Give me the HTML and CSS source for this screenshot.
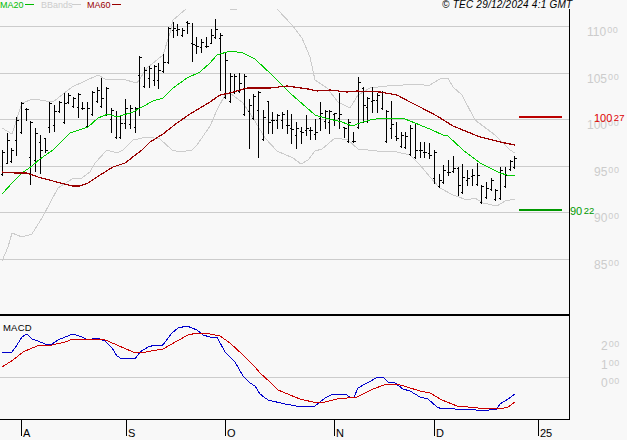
FILE: index.html
```html
<!DOCTYPE html>
<html lang="en">
<head>
<meta charset="utf-8">
<title>TEC chart</title>
<link rel="stylesheet" href="styles.css">
</head>
<body>
<svg class="chart" width="627" height="440" viewBox="0 0 627 440" xmlns="http://www.w3.org/2000/svg">
  <g class="grid">
    <path d="M0 26.5H569M0 73.5H569M0 119.5H569M0 166.5H569M0 212.5H569M0 259.5H569M0 377.5H569"/>
  </g>

  <g class="legend">
    <text class="t-green" x="0" y="8">MA20</text>
    <path class="mark mark-green" d="M25 4.5H34"/>
    <text class="t-gray" x="41" y="8">BBands</text>
    <path class="mark mark-gray" d="M72 4.5H81"/>
    <text class="t-maroon" x="87" y="8">MA60</text>
    <path class="mark mark-maroon" d="M112 4.5H121"/>
  </g>
  <text class="stamp" x="442" y="8">© TEC 29/12/2024 4:1 GMT</text>

  <polyline class="line band" points="2,128 12,134 22,103 33,99 53,102 72,87 98,75 105,79 122,79 137,83 147,68 163,55 170,33 173,20 186,9"/>
  <polyline class="line band" points="230,9 237,9"/>
  <polyline class="line band" points="277,9 292,25 302,38 310,57 315,80 327,88 338,102 350,108 358,95 370,88 387,86 420,84 428,86 440,79 448,78 453,87 462,95 475,120 495,135 510,150 515,153"/>
  <polyline class="line band" points="2,261 8,247 12,233 22,237 32,234 42,218 58,188 72,179 82,178 90,172 95,163 107,150 117,153 123,150 133,140 147,137 160,139 172,150 180,152 192,150 197,145 210,126 217,110 225,95 230,93 243,103 253,118 265,138 277,151 293,158 301,164 308,160 315,151 322,149 335,138 348,140 358,149 377,151 397,152 410,155 420,165 430,177 440,188 453,195 467,200 475,198 483,203 497,206 505,201 515,199"/>

  <g id="bars" class="bars"></g>

  <polyline class="line ma20" points="2,194 13,182 22,173 32,166 40,159 53,150 70,133 88,127 98,118 108,114 117,117 133,112 142,107 153,101 163,98 173,88 187,78 200,72 210,63 217,55 230,51 243,53 255,59 272,75 290,93 315,115 325,118 342,122 352,126 360,123 370,120 382,118 392,118 405,119 420,125 432,130 443,135 448,136 463,150 480,163 500,173 507,175 515,175"/>
  <polyline class="line ma60" points="2,172 15,173 27,173 38,177 53,181 72,186 80,186 88,183 100,175 113,167 125,163 142,150 150,142 163,134 177,123 190,114 210,102 220,95 230,93 247,88 270,88 287,86 308,89 317,91 330,90 347,92 357,91 380,92 397,95 410,102 420,107 437,116 453,126 480,137 500,142 515,145"/>

  <path class="level-up" d="M519 117H562"/>
  <path class="level-down" d="M519 210H562"/>

  <path class="axis" d="M569.5 9V419.5H0"/>
  <path class="divider" d="M0 315H570"/>
  <path class="axis" d="M21.5 419V436M126.5 419V436M225.5 419V436M334.5 419V436M434.5 419V436M538.5 419V436"/>

  <text class="sub" x="3" y="331">MACD</text>
  <polyline class="line macd-blue" points="2,353 12,352 17,345 22,337 27,334 32,339 38,341 45,344 52,344 58,340 65,337 73,334 82,337 88,340 97,338 105,341 112,348 117,356 122,359 128,358 135,359 140,352 148,347 155,345 162,346 172,333 178,328 187,326 197,330 203,335 210,337 217,337 225,352 235,362 243,376 250,383 255,386 260,394 268,400 285,404 302,407 315,406 325,398 333,394 345,394 350,397 354,397 358,388 367,383 378,377 383,377 388,382 395,383 403,389 410,391 420,397 428,399 437,407 442,409 452,408 458,410 470,409 482,411 497,409 500,404 508,399 515,394"/>
  <polyline class="line macd-red" points="2,367 13,360 23,352 32,348 40,345 52,345 65,342 73,339 88,339 103,339 117,345 133,352 140,353 163,349 177,341 188,335 197,333 210,334 220,336 230,343 243,355 255,367 260,373 270,382 278,390 290,395 300,399 317,403 325,402 337,399 357,397 373,389 387,384 397,384 407,387 420,391 430,393 442,400 457,406 478,408 500,409 508,407 515,402"/>

  <g class="scale">
    <text x="587" y="36">110<tspan class="frac" dx="1" dy="-3">00</tspan></text>
    <text x="587" y="83">105<tspan class="frac" dx="1" dy="-3">00</tspan></text>
    <text x="587" y="129">100<tspan class="frac" dx="1" dy="-3">00</tspan></text>
    <text x="594" y="176">95<tspan class="frac" dx="1" dy="-3">00</tspan></text>
    <text x="594" y="222">90<tspan class="frac" dx="1" dy="-3">00</tspan></text>
    <text x="594" y="269">85<tspan class="frac" dx="1" dy="-3">00</tspan></text>
    <text x="601" y="350">2<tspan class="frac" dx="1" dy="-3">00</tspan></text>
    <text x="601" y="369">1<tspan class="frac" dx="1" dy="-3">00</tspan></text>
    <text x="601" y="387">0<tspan class="frac" dx="1" dy="-3">00</tspan></text>
  </g>

  <text class="price price-up" x="594" y="122">100<tspan class="price-frac" dx="1.5" dy="-1">27</tspan></text>
  <text class="price price-down" x="570" y="215">90<tspan class="price-frac" dx="1.5" dy="-1">22</tspan></text>

  <g class="months">
    <text x="23" y="437">A</text>
    <text x="128" y="437">S</text>
    <text x="227" y="437">O</text>
    <text x="336" y="437">N</text>
    <text x="436" y="437">D</text>
    <text x="540" y="437">25</text>
  </g>
</svg>
<script src="chart.js"></script>
</body>
</html>
```

FILE: styles.css
```css
html, body {
  margin: 0;
  padding: 0;
  background: #f8f8f8;
}

.chart {
  display: block;
  font-family: "Liberation Sans", Arial, sans-serif;
}

.grid path {
  fill: none;
  stroke: #cccccc;
  stroke-width: 1;
  shape-rendering: crispEdges;
}

.legend text {
  font-size: 9px;
}

.t-green { fill: #00bb00; }
.t-gray { fill: #cccccc; }
.t-maroon { fill: #990000; }

.mark {
  fill: none;
  stroke-width: 1;
  shape-rendering: crispEdges;
}
.mark-green { stroke: #00bb00; }
.mark-gray { stroke: #cccccc; }
.mark-maroon { stroke: #990000; }

.stamp {
  font-size: 10px;
  font-style: italic;
  letter-spacing: 0.24px;
  fill: #000000;
}

.line {
  fill: none;
  stroke-width: 1;
  shape-rendering: crispEdges;
}
.band { stroke: #cccccc; }
.ma20 { stroke: #00cc00; }
.ma60 { stroke: #990000; stroke-width: 1.2; }
.macd-blue { stroke: #0000cc; }
.macd-red { stroke: #cc0000; }

.bars path {
  fill: none;
  stroke: #000000;
  stroke-width: 1;
  shape-rendering: crispEdges;
}

.level-up,
.level-down {
  fill: none;
  stroke-width: 2;
  shape-rendering: crispEdges;
}
.level-up { stroke: #bb0000; }
.level-down { stroke: #009900; }

.axis {
  fill: none;
  stroke: #000000;
  stroke-width: 1;
  shape-rendering: crispEdges;
}

.divider {
  fill: none;
  stroke: #000000;
  stroke-width: 2;
  shape-rendering: crispEdges;
}

.sub {
  font-size: 9.5px;
  letter-spacing: 0.2px;
  fill: #000000;
}

.scale text {
  font-size: 12px;
  fill: #cccccc;
}
.scale .frac {
  font-size: 9px;
  letter-spacing: 0.6px;
}

.price {
  font-size: 11px;
}
.price-frac {
  font-size: 9.5px;
}
.price-up { fill: #dd0000; }
.price-down { fill: #009900; }

.months text {
  font-size: 11px;
  fill: #000000;
}
```

FILE: chart.js
```js
// Daily bars: [high, low, open, close] in pixels of the chart.
var BARS = [
[150,175,174,152],[133,163,163,140],[148,162,161,150],[117,155,140,120],[102,133,132,103],
[108,120,109,109],[121,184,157,122],[128,171,160,133],[135,173,142,150],[138,152,138,150],
[102,132,127,103],[105,131,125,111],[101,112,111,102],[93,123,122,103],[93,103,102,95],
[97,107,106,98],[93,117,107,94],[102,109,108,108],[102,127,126,108],[91,115,114,92],
[87,102,101,90],[78,107,106,98],[87,115,114,88],[108,132,119,110],[111,138,137,116],
[115,138,137,123],[99,128,123,108],[105,128,124,108],[107,132,127,108],[56,115,75,57],
[67,87,86,70],[66,87,78,68],[65,85,80,66],[63,88,80,70],[54,72,71,62],
[27,63,62,28],[22,37,30,28],[24,35,30,29],[28,36,35,30],[21,33,22,23],
[23,61,43,44],[37,53,45,46],[39,52,47,42],[37,47,46,46],[29,43,43,35],
[19,38,37,29],[33,90,38,35],[52,98,97,60],[73,102,101,76],[74,93,92,76],
[73,92,91,83],[74,115,114,76],[99,148,111,105],[94,119,118,96],[91,157,110,92],
[110,140,139,117],[101,133,101,122],[112,133,120,120],[114,128,120,115],[112,128,120,114],
[110,133,125,125],[114,143,128,129],[122,148,135,128],[127,143,131,132],[115,135,130,128],
[127,139,130,130],[119,139,134,132],[102,130,118,113],[110,128,121,111],[110,133,122,111],
[113,125,114,113],[93,128,118,114],[127,137,127,128],[119,142,141,122],[132,142,141,141],
[77,128,127,82],[87,122,88,105],[97,122,107,98],[87,112,101,100],[93,112,100,95],
[91,109,108,92],[110,142,141,111],[101,138,128,124],[122,140,136,138],[132,147,146,135],
[132,148,147,136],[125,155,154,128],[123,158,157,150],[142,157,150,150],[142,157,152,152],
[143,158,153,155],[150,183,178,152],[174,187,186,180],[165,183,182,170],[160,175,172,172],
[156,172,171,168],[167,195,168,185],[164,193,192,177],[170,185,180,178],[169,185,176,175],
[163,185,184,175],[185,203,202,186],[182,198,197,188],[178,190,189,180],[189,200,199,190],
[167,199,198,170],[167,187,186,175],[160,170,169,161],[156,168,167,158]
];

var d = "";
BARS.forEach(function (b, i) {
  var x = Math.floor(2.3 + 4.747 * i) + 0.5;
  d += "M" + x + " " + b[0] + "V" + (b[1] + 1);
  d += "M" + (x - 2) + " " + (b[2] + 0.5) + "H" + x;
  d += "M" + x + " " + (b[3] + 0.5) + "H" + (x + 2);
});
var path = document.createElementNS("http://www.w3.org/2000/svg", "path");
path.setAttribute("d", d);
document.getElementById("bars").appendChild(path);
```
